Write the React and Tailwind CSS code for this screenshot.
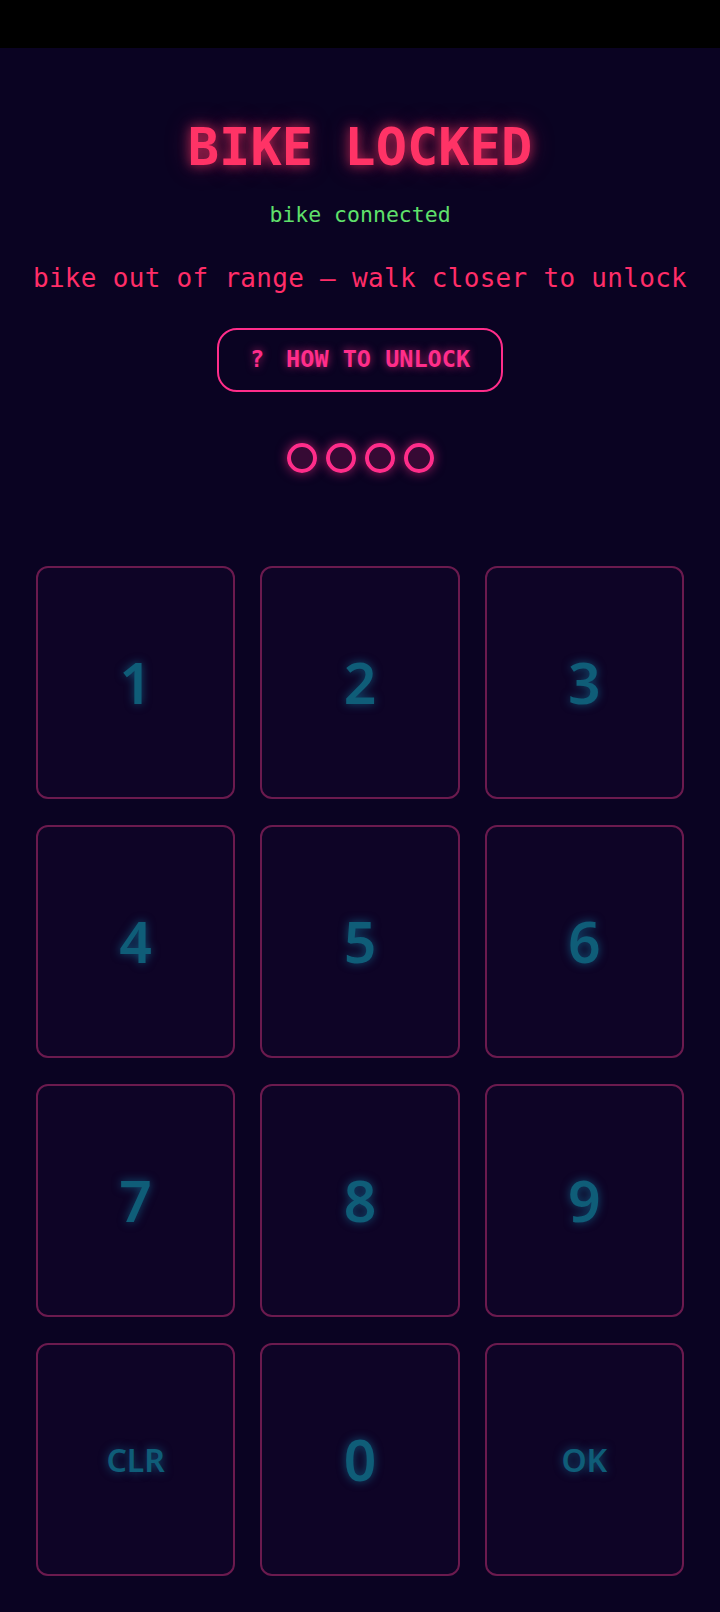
export default function App() {
  const keys = ["1", "2", "3", "4", "5", "6", "7", "8", "9", "CLR", "0", "OK"];
  const mono = { fontFamily: '"DejaVu Sans Mono", "Liberation Mono", monospace' };
  const keyFont = { fontFamily: '"Noto Sans", "Open Sans", sans-serif' };
  return (
    <div className="w-[720px] h-[1612px] bg-[#0a0322] flex flex-col" style={mono}>
      <div className="h-[48px] bg-black shrink-0" />
      <div className="flex flex-col items-center">
        <h1 className="mt-[69px] text-[52px] leading-[60px] font-bold text-[#ff3366] [text-shadow:0_0_12px_rgba(255,51,102,0.7),0_0_24px_rgba(255,51,102,0.35)]">
          BIKE LOCKED
        </h1>
        <div className="mt-[24px] text-[21.5px] leading-[28px] text-[#5fe06b]">bike connected</div>
        <div className="mt-[33px] text-[26px] leading-[32px] text-[#ff2d68] tracking-[0.3px]">
          bike out of range — walk closer to unlock
        </div>
        <button className="mt-[34px] w-[286px] h-[64px] rounded-[20px] border-2 border-[#ff2d8a] flex items-center justify-center gap-[22px] text-[23.5px] font-bold text-[#ff2d8a] [text-shadow:0_0_8px_rgba(255,45,138,0.7)]">
          <span>?</span>
          <span>HOW TO UNLOCK</span>
        </button>
        <div className="mt-[51px] flex gap-[9px]">
          {[0, 1, 2, 3].map((i) => (
            <div
              key={i}
              className="w-[30px] h-[30px] rounded-full border-[4px] border-[#ff2d8a] bg-[rgba(255,45,138,0.18)] shadow-[0_0_12px_rgba(255,45,138,0.6)]"
            />
          ))}
        </div>
      </div>
      <div className="mt-[93px] px-[36px] grid grid-cols-3 gap-x-[25px] gap-y-[26px] auto-rows-[233px]">
        {keys.map((k) => (
          <div
            key={k}
            className="rounded-[12px] border-2 border-[#6b1a4e] bg-[#0e0426] flex items-center justify-center"
          >
            <span
              style={keyFont}
              className={
                (k.length > 1 ? "text-[32px] " : "text-[57px] ") +
                "font-semibold leading-none text-[#0f5d78] [text-shadow:0_0_10px_rgba(20,140,180,0.55)]"
              }
            >
              {k}
            </span>
          </div>
        ))}
      </div>
    </div>
  );
}
